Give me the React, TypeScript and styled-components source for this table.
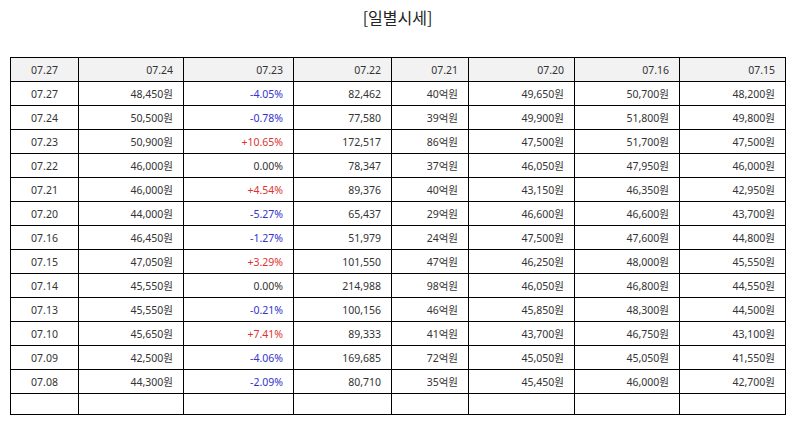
import React from 'react';
import styled, { createGlobalStyle } from 'styled-components';

const GlobalStyle = createGlobalStyle`
  html, body {
    margin: 0;
    padding: 0;
    background: #ffffff;
  }
  body {
    font-family: "Noto Sans", "Noto Sans CJK KR", sans-serif;
    color: #333333;
  }
`;

const Page = styled.div`
  width: 795px;
  padding: 0 10px;
  box-sizing: border-box;
`;

const Title = styled.h2`
  margin: 0 0 23px;
  height: 34px;
  line-height: 34px;
  text-align: center;
  font-size: 16px;
  font-weight: 400;
  color: #222222;
  font-family: "Noto Sans CJK KR", sans-serif;
`;

const Table = styled.table`
  width: 775px;
  border-collapse: collapse;
  table-layout: fixed;
  border: 1px solid #000000;
`;

const HeadCell = styled.th<{ $center?: boolean }>`
  height: 23px;
  padding: 0 10px;
  border: 1px solid #000000;
  background: #f2f2f2;
  font-size: 10.5px;
  font-weight: 400;
  color: #333333;
  text-align: ${({ $center }) => ($center ? 'center' : 'right')};
`;

type Tone = 'up' | 'down' | 'flat';

const Cell = styled.td<{ $center?: boolean; $tone?: Tone; $short?: boolean }>`
  height: ${({ $short }) => ($short ? '20px' : '23px')};
  padding: 0 10px;
  border: 1px solid #000000;
  font-size: 10.5px;
  white-space: nowrap;
  text-align: ${({ $center }) => ($center ? 'center' : 'right')};
  color: ${({ $tone }) =>
    $tone === 'up' ? '#dd3333' : $tone === 'down' ? '#3333cc' : '#333333'};
`;

const widths = [68, 105, 110, 98, 77, 106, 105, 106];
const headers = ['07.27', '07.24', '07.23', '07.22', '07.21', '07.20', '07.16', '07.15'];

const rows: string[][] = [
  ['07.27', '48,450원', '-4.05%', '82,462', '40억원', '49,650원', '50,700원', '48,200원'],
  ['07.24', '50,500원', '-0.78%', '77,580', '39억원', '49,900원', '51,800원', '49,800원'],
  ['07.23', '50,900원', '+10.65%', '172,517', '86억원', '47,500원', '51,700원', '47,500원'],
  ['07.22', '46,000원', '0.00%', '78,347', '37억원', '46,050원', '47,950원', '46,000원'],
  ['07.21', '46,000원', '+4.54%', '89,376', '40억원', '43,150원', '46,350원', '42,950원'],
  ['07.20', '44,000원', '-5.27%', '65,437', '29억원', '46,600원', '46,600원', '43,700원'],
  ['07.16', '46,450원', '-1.27%', '51,979', '24억원', '47,500원', '47,600원', '44,800원'],
  ['07.15', '47,050원', '+3.29%', '101,550', '47억원', '46,250원', '48,000원', '45,550원'],
  ['07.14', '45,550원', '0.00%', '214,988', '98억원', '46,050원', '46,800원', '44,550원'],
  ['07.13', '45,550원', '-0.21%', '100,156', '46억원', '45,850원', '48,300원', '44,500원'],
  ['07.10', '45,650원', '+7.41%', '89,333', '41억원', '43,700원', '46,750원', '43,100원'],
  ['07.09', '42,500원', '-4.06%', '169,685', '72억원', '45,050원', '45,050원', '41,550원'],
  ['07.08', '44,300원', '-2.09%', '80,710', '35억원', '45,450원', '46,000원', '42,700원'],
];

const toneOf = (value: string): Tone =>
  value.startsWith('+') ? 'up' : value.startsWith('-') ? 'down' : 'flat';

export default function App() {
  return (
    <>
      <GlobalStyle />
      <Page>
        <Title>[일별시세]</Title>
        <Table>
          <colgroup>
            {widths.map((w, i) => (
              <col key={i} style={{ width: w }} />
            ))}
          </colgroup>
          <thead>
            <tr>
              {headers.map((h, i) => (
                <HeadCell key={i} $center={i === 0}>
                  {h}
                </HeadCell>
              ))}
            </tr>
          </thead>
          <tbody>
            {rows.map((row) => (
              <tr key={row[0]}>
                {row.map((value, i) => (
                  <Cell key={i} $center={i === 0} $tone={i === 2 ? toneOf(value) : 'flat'}>
                    {value}
                  </Cell>
                ))}
              </tr>
            ))}
            <tr>
              {widths.map((_, i) => (
                <Cell key={i} $short />
              ))}
            </tr>
          </tbody>
        </Table>
      </Page>
    </>
  );
}
